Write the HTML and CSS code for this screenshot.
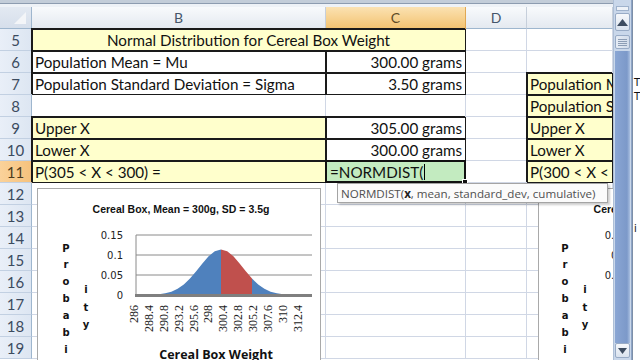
FILE: index.html
```html
<!DOCTYPE html>
<html>
<head>
<meta charset="utf-8">
<link rel="stylesheet" href="styles.css">
</head>
<body>
<div class="app">
  <div class="sheet">
    <div class="topbar"></div>
    <div class="grid">
      <div class="corner"><svg width="31" height="21" viewBox="0 0 31 21"><polygon points="26,5 26,17 14,17" fill="#f3f5f8"/></svg></div>
      <div class="ch">B</div>
      <div class="ch sel">C</div>
      <div class="ch">D</div>
      <div class="ch"></div>

      <div class="rh">5</div>
      <div class="c y b ctr span2">Normal Distribution for Cereal Box Weight</div>
      <div class="c"></div>
      <div class="c"></div>

      <div class="rh">6</div>
      <div class="c b">Population Mean = Mu</div>
      <div class="c b r">300.00 grams</div>
      <div class="c"></div>
      <div class="c"></div>

      <div class="rh">7</div>
      <div class="c b">Population Standard Deviation = Sigma</div>
      <div class="c b r">3.50 grams</div>
      <div class="c"></div>
      <div class="c y b">Population Mean = Mu</div>

      <div class="rh">8</div>
      <div class="c"></div>
      <div class="c"></div>
      <div class="c"></div>
      <div class="c y b">Population Standard Deviation = Sigma</div>

      <div class="rh">9</div>
      <div class="c y b">Upper X</div>
      <div class="c b r">305.00 grams</div>
      <div class="c"></div>
      <div class="c y b">Upper X</div>

      <div class="rh">10</div>
      <div class="c y b">Lower X</div>
      <div class="c b r">300.00 grams</div>
      <div class="c"></div>
      <div class="c y b">Lower X</div>

      <div class="rh sel">11</div>
      <div class="c y b">P(305 &lt; X &lt; 300) =</div>
      <div class="c act">=NORMDIST(<span class="caret"></span><span class="handle"></span></div>
      <div class="c"></div>
      <div class="c y b">P(300 &lt; X &lt; 295) =</div>

      <div class="rh">12</div><div class="c"></div><div class="c"></div><div class="c"></div><div class="c"></div>
      <div class="rh">13</div><div class="c"></div><div class="c"></div><div class="c"></div><div class="c"></div>
      <div class="rh">14</div><div class="c"></div><div class="c"></div><div class="c"></div><div class="c"></div>
      <div class="rh">15</div><div class="c"></div><div class="c"></div><div class="c"></div><div class="c"></div>
      <div class="rh">16</div><div class="c"></div><div class="c"></div><div class="c"></div><div class="c"></div>
      <div class="rh">17</div><div class="c"></div><div class="c"></div><div class="c"></div><div class="c"></div>
      <div class="rh">18</div><div class="c"></div><div class="c"></div><div class="c"></div><div class="c"></div>
      <div class="rh">19</div><div class="c"></div><div class="c"></div><div class="c"></div><div class="c"></div>
    </div>

    <div class="chart chart1">
      <svg width="284" height="175" viewBox="0 0 284 175">
        <text x="143" y="24" class="ttl" text-anchor="middle">Cereal Box, Mean = 300g, SD = 3.5g</text>
        <g class="ylab" text-anchor="middle">
          <text x="28" y="63">P</text><text x="28" y="79">r</text><text x="28" y="96">o</text><text x="28" y="113">b</text><text x="28" y="130">a</text><text x="28" y="147">b</text><text x="28" y="164">i</text>
          <text x="48" y="104">i</text><text x="48" y="122">t</text><text x="48" y="139">y</text>
        </g>
        <g class="tick" text-anchor="end">
          <text x="85" y="50">0.15</text><text x="85" y="70">0.1</text><text x="85" y="90">0.05</text><text x="85" y="110">0</text>
        </g>
        <g stroke="#8a8a8a" stroke-width="1">
          <line x1="98" y1="46" x2="274" y2="46"/><line x1="98" y1="66" x2="274" y2="66"/><line x1="98" y1="86" x2="274" y2="86"/>
        </g>
        <polygon fill="#4f81bd" points="98,106 98,105.9 108.6,105.87 114.8,105.67 121,105.23 127.2,104.33 133.4,102.65 139.6,99.83 145.8,95.51 152,89.57 158.2,82.27 164.4,74.42 170.6,67.27 176.8,62.23 183,60.41 183,106"/>
        <polygon fill="#c0504d" points="183,106 183,60.41 189.2,62.23 195.4,67.27 201.6,74.42 207.8,82.27 214,89.57 214,106"/>
        <polygon fill="#4f81bd" points="214,106 214,89.57 220.2,95.51 226.4,99.83 232.6,102.65 238.8,104.33 245,105.23 251.2,105.67 257.4,105.87 272,106"/>
        <line x1="98" y1="46" x2="98" y2="107" stroke="#8a8a8a"/>
        <line x1="97" y1="106.5" x2="274" y2="106.5" stroke="#7f7f7f" stroke-width="3"/>
        <g class="xl" text-anchor="end">
          <text transform="translate(100,116) rotate(-90)">286</text>
          <text transform="translate(114.9,116) rotate(-90)">288.4</text>
          <text transform="translate(129.8,116) rotate(-90)">290.8</text>
          <text transform="translate(144.6,116) rotate(-90)">293.2</text>
          <text transform="translate(159.5,116) rotate(-90)">295.6</text>
          <text transform="translate(174.4,116) rotate(-90)">298</text>
          <text transform="translate(189.3,116) rotate(-90)">300.4</text>
          <text transform="translate(204.2,116) rotate(-90)">302.8</text>
          <text transform="translate(219,116) rotate(-90)">305.2</text>
          <text transform="translate(233.9,116) rotate(-90)">307.6</text>
          <text transform="translate(248.8,116) rotate(-90)">310</text>
          <text transform="translate(263.7,116) rotate(-90)">312.4</text>
        </g>
        <text x="178" y="170" class="xt" text-anchor="middle">Cereal Box Weight</text>
      </svg>
    </div>

    <div class="chart chart2">
      <svg width="284" height="175" viewBox="0 0 284 175">
        <text x="143" y="24" class="ttl" text-anchor="middle">Cereal Box, Mean = 300g, SD = 3.5g</text>
        <g class="ylab" text-anchor="middle">
          <text x="26" y="63">P</text><text x="26" y="79">r</text><text x="26" y="96">o</text><text x="26" y="113">b</text><text x="26" y="130">a</text><text x="26" y="147">b</text><text x="26" y="164">i</text>
          <text x="46" y="104">i</text><text x="46" y="122">t</text><text x="46" y="139">y</text>
        </g>
        <g class="tick" text-anchor="end">
          <text x="88" y="50">0.15</text><text x="88" y="70">0.1</text><text x="88" y="90">0.05</text><text x="88" y="110">0</text>
        </g>
      </svg>
    </div>

    <div class="tip">NORMDIST(<b>x</b>, mean, standard_dev, cumulative)</div>
  </div>

  <div class="vscroll">
    <div class="split"></div>
    <div class="sbtn up"><svg width="11" height="7" viewBox="0 0 11 7"><polygon points="5.5,0 11,7 0,7" fill="#3d4c60"/></svg></div>
    <div class="thumb"><span></span><span></span><span></span><span></span></div>
    <div class="track"></div>
    <div class="sbtn down"><svg width="9" height="6" viewBox="0 0 9 6"><polygon points="0,0 9,0 4.5,6" fill="#3d4c60"/></svg></div>
  </div>

  <div class="outside">
    <span class="o1">T</span>
    <span class="o2">T</span>
    <span class="o3">i</span>
  </div>
</div>
</body>
</html>
```

FILE: styles.css
```css
* { box-sizing: border-box; }
body {
  margin: 0;
  width: 640px;
  height: 360px;
  overflow: hidden;
  background: #fff;
  font-family: Lato, "Open Sans", sans-serif;
}
.app { display: flex; height: 360px; }
.sheet {
  position: relative;
  width: 613px;
  height: 360px;
  overflow: hidden;
  background: #fff;
}
.topbar {
  height: 7px;
  background: linear-gradient(#c3cdd9 0, #c3cdd9 3px, #8d9cb0 3px, #8d9cb0 4px, #eef2f7 4px);
}
.grid {
  display: grid;
  grid-template-columns: 32px 294px 140px 61px 86px;
  grid-auto-rows: 22px;
}
.corner {
  background: linear-gradient(#e3e9f2, #d6dfeb);
  border-right: 1px solid #9eb6ce;
  border-bottom: 1px solid #9eb6ce;
  overflow: hidden;
}
.corner svg { display: block; }
.ch {
  display: flex;
  align-items: center;
  justify-content: center;
  background: linear-gradient(#f8fafc, #e4e9f0);
  border-right: 1px solid #c6cfdb;
  border-bottom: 1px solid #9eb6ce;
  color: #45556a;
  font-size: 14px;
}
.ch.sel {
  background: linear-gradient(#fbe2b2, #f3c372);
  border-right-color: #e0a854;
  border-bottom-color: #d9963c;
  color: #5e4a26;
}
.rh {
  display: flex;
  align-items: center;
  justify-content: center;
  background: linear-gradient(90deg, #e9eff8, #dde6f2);
  border-right: 1px solid #9eb6ce;
  border-bottom: 1px solid #c2d0e2;
  color: #3c4b5f;
  font-size: 15px;
}
.rh.sel {
  background: linear-gradient(90deg, #fad29a, #f6c27d);
  border-right-color: #d9963c;
  color: #4d3c20;
}
.c {
  display: flex;
  align-items: center;
  padding: 0 3px;
  white-space: nowrap;
  overflow: hidden;
  border-right: 1px solid #d0d7e5;
  border-bottom: 1px solid #d0d7e5;
  font-size: 15.2px;
  color: #111;
}
.span2 { grid-column: span 2; }
.r { justify-content: flex-end; }
.ctr { justify-content: center; }
.y { background: #ffffcc; }
.b {
  border-right-color: #1a1a1a;
  border-bottom-color: #1a1a1a;
  box-shadow: inset 1px 1px 0 #1a1a1a, -1px -1px 0 #1a1a1a;
}
.act {
  position: relative;
  overflow: visible;
  background: #c3ebc0;
  border: 2px solid #111;
  margin: -1px 0 0 -1px;
  padding-left: 3px;
}
.caret {
  display: inline-block;
  width: 1px;
  height: 16px;
  background: #000;
  margin-left: 1px;
}
.handle {
  position: absolute;
  right: -4px;
  bottom: -4px;
  width: 6px;
  height: 6px;
  background: #111;
  border: 1px solid #fff;
}
.chart {
  position: absolute;
  top: 188px;
  width: 284px;
  height: 175px;
  background: #fff;
  border: 1px solid #a9a9a9;
}
.chart svg { display: block; }
.chart1 { left: 37px; }
.chart2 { left: 538px; }
.ttl { font: bold 10.5px "Liberation Sans", sans-serif; fill: #111; }
.ylab { font: bold 10px "DejaVu Sans", sans-serif; fill: #111; }
.tick { font: 10px "DejaVu Sans", sans-serif; fill: #222; }
.xl { font: 12px "Liberation Serif", serif; fill: #222; }
.xt { font: bold 12.5px "Open Sans", sans-serif; fill: #111; }
.tip {
  position: absolute;
  left: 337px;
  top: 183px;
  width: 271px;
  height: 20px;
  padding: 0 3px;
  display: flex;
  align-items: center;
  white-space: nowrap;
  overflow: hidden;
  background: #fbfbfb;
  border: 1px solid #a4a4a4;
  box-shadow: 2px 2px 2px rgba(0,0,0,0.2);
  font-family: "Open Sans", sans-serif;
  font-size: 11.6px;
  color: #505050;
}
.tip b { color: #222; }
.vscroll {
  width: 19px;
  height: 360px;
  display: flex;
  flex-direction: column;
  background: #c9d7ea;
  border-left: 1px solid #aebfd6;
  border-right: 1px solid #8ea5c6;
}
.split {
  height: 5px;
  margin: 6px 2px 2px;
  border: 1px solid #9fb2cc;
  background: #eef2f8;
}
.sbtn {
  display: flex;
  align-items: center;
  justify-content: center;
  margin: 0 1px;
  border: 1px solid #98abc6;
  border-radius: 2px;
  background: linear-gradient(#f6f8fb, #d9e2ee);
}
.up { height: 18px; }
.down { height: 15px; margin-bottom: 2px; }
.thumb {
  height: 14px;
  margin: 4px 1px 2px;
  border: 1px solid #98abc6;
  border-radius: 2px;
  background: linear-gradient(90deg, #e6ecf5, #d2dcea);
  display: flex;
  flex-direction: column;
  align-items: center;
  justify-content: center;
  gap: 1px;
}
.thumb span { width: 9px; height: 1px; background: #8c9db5; }
.track {
  flex: 1;
  margin: 0 1px;
  background: linear-gradient(90deg, #8aa6d4, #7c99c9 80%, #a9bfe0);
}
.outside {
  position: relative;
  flex: 1;
  overflow: hidden;
  background: #fff;
  border-left: 1px solid #7d8fa8;
  font-family: "DejaVu Sans", sans-serif;
  font-size: 10px;
  line-height: 10px;
  color: #111;
}
.outside span { position: absolute; left: 1px; line-height: 10px; }
.o1 { top: 78px; }
.o2 { top: 92px; }
.o3 { top: 224px; }
```
